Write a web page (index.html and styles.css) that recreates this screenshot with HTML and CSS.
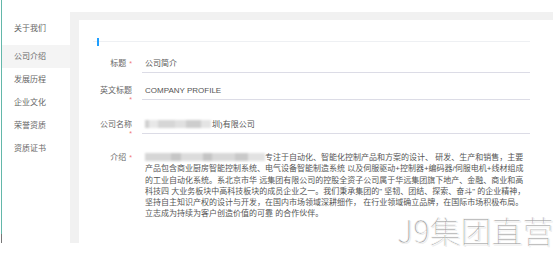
FILE: index.html
```html
<!DOCTYPE html>
<html lang="zh-CN">
<head>
<meta charset="utf-8">
<title>公司介绍</title>
<link rel="stylesheet" href="styles.css">
</head>
<body>
<div class="page">
  <aside class="sidebar">
    <div class="side-title">关于我们</div>
    <ul class="side-menu">
      <li class="active">公司介绍</li>
      <li>发展历程</li>
      <li>企业文化</li>
      <li>荣誉资质</li>
      <li>资质证书</li>
    </ul>
  </aside>
  <main class="main">
    <section class="card">
      <div class="tab-bar"><span class="tab-mark"></span></div>
      <form class="form">
        <div class="item item-first">
          <div class="label"><span class="label-text">标题</span><span class="req">*</span></div>
          <div class="input">公司简介</div>
        </div>
        <div class="item item-wrap">
          <div class="label label-stack"><span class="label-text">英文标题</span><span class="req">*</span></div>
          <div class="input">COMPANY PROFILE</div>
        </div>
        <div class="item item-wrap2">
          <div class="label label-stack"><span class="label-text">公司名称</span><span class="req">*</span></div>
          <div class="input"><span class="blur blur-name"></span>圳)有限公司</div>
        </div>
        <div class="item">
          <div class="label"><span class="label-text">介绍</span><span class="req">*</span></div>
          <div class="textarea">
            <div class="line"><span class="blur blur-intro"></span>专注于自动化、智能化控制产品和方案的设计、 研发、生产和销售，主要</div>
            <div class="line">产品包含商业厨房智能控制系统、电气设备智能制造系统 以及伺服驱动+控制器+编码器/伺服电机+线材组成</div>
            <div class="line">的工业自动化系统。系北京市华 远集团有限公司的控股全资子公司属于华远集团旗下地产、金融、商业和高</div>
            <div class="line">科技四 大业务板块中高科技板块的成员企业之一。我们秉承集团的" 坚韧、团结、探索、奋斗" 的企业精神，</div>
            <div class="line">坚持自主知识产权的设计与开发，在国内市场领域深耕细作， 在行业领域确立品牌，在国际市场积极布局。</div>
            <div class="line">立志成为持续为客户创造价值的可靠 的合作伙伴。</div>
          </div>
        </div>
      </form>
    </section>
  </main>
</div>
<div class="watermark">J9集团直营</div>
</body>
</html>
```

FILE: styles.css
```css
html, body {
  margin: 0;
  padding: 0;
  background: #ffffff;
}
body {
  font-family: "Liberation Sans", "Noto Sans CJK SC", sans-serif;
  font-size: 8px;
  color: #555;
  position: relative;
  width: 557px;
  height: 254px;
  overflow: hidden;
}
.page {
  display: flex;
  margin-left: 1px;
  height: 243px;
  border-left: 1px solid #63b7aa;
  border-image: linear-gradient(to bottom, #63b7aa 0, #63b7aa 96%, #777 96%, #777 100%) 1;
}
.sidebar {
  width: 68px;
  padding-top: 12px;
  box-sizing: border-box;
  color: #666;
}
.side-title {
  height: 33px;
  line-height: 34px;
  padding-left: 12px;
}
.side-menu {
  list-style: none;
  margin: 0;
  padding: 0;
}
.side-menu li {
  height: 23px;
  line-height: 23px;
  padding-left: 12px;
}
.side-menu li.active {
  background: #f4f4f4;
}
.main {
  width: 483px;
  margin-top: 12px;
  padding: 8px 0 0 9px;
  box-sizing: border-box;
  background: #f1f1f1;
  display: flex;
}
.card {
  flex: 1;
  background: #fff;
  padding: 0 23px 0 14px;
}
.tab-bar {
  height: 21px;
  border-bottom: 1px solid #eef0f3;
  display: flex;
  align-items: flex-end;
}
.tab-mark {
  width: 2px;
  height: 8px;
  margin-left: 4px;
  margin-bottom: -5px;
  background: #1e9fff;
}
.form {
  padding-top: 12px;
  margin-left: 3px;
}
.item {
  display: flex;
  align-items: flex-start;
  margin-bottom: 10px;
}
.item-first { margin-bottom: 8px; }
.item-wrap { margin-bottom: 11px; }
.item-wrap2 { margin-bottom: 10px; }
.label {
  width: 36px;
  flex: none;
  display: flex;
  justify-content: flex-end;
  align-items: baseline;
  gap: 3px;
  padding-top: 5px;
  line-height: 9px;
  color: #666;
}
.label-stack {
  flex-direction: column;
  align-items: flex-end;
  gap: 0;
}
.label-text {
  white-space: nowrap;
}
.req {
  color: #f07878;
  font-size: 7px;
}
.input {
  flex: 1;
  margin-left: 10px;
  height: 18px;
  line-height: 19px;
  padding-left: 3px;
  border-bottom: 1px solid #dcdce6;
  white-space: nowrap;
  display: flex;
  align-items: center;
}
.textarea {
  flex: 1;
  margin-left: 10px;
  padding: 4px 0 0 3px;
  line-height: 11.3px;
  white-space: nowrap;
}
.line {
  height: 11.3px;
}
.blur {
  display: inline-block;
  height: 8px;
  vertical-align: -1px;
  filter: blur(1.2px);
}
.blur-name {
  width: 66px;
  margin-right: 1px;
  background: linear-gradient(to right, #d0d0d0 0 6%, #e8e8e8 6% 20%, #d6d6d6 20% 45%, #e0e0e0 45% 62%, #cdcdcd 62% 85%, #e4e4e4 85% 100%);
}
.blur-intro {
  width: 120px;
  background: linear-gradient(to right, #d6d6d6 0 22%, #c6c6c6 22% 30%, #dcdcdc 30% 48%, #c4c4c4 48% 56%, #d8d8d8 56% 75%, #c9c9c9 75% 86%, #e2e2e2 86% 100%);
}
.watermark {
  position: absolute;
  left: 397px;
  top: 210px;
  font-family: "Noto Sans CJK SC", sans-serif;
  font-weight: 200;
  font-size: 31px;
  line-height: 40px;
  color: #a4a4a4;
  -webkit-text-stroke: 0.7px #ffffff;
  text-shadow: 1px 1px 0 #ececec;
  white-space: nowrap;
}
```
